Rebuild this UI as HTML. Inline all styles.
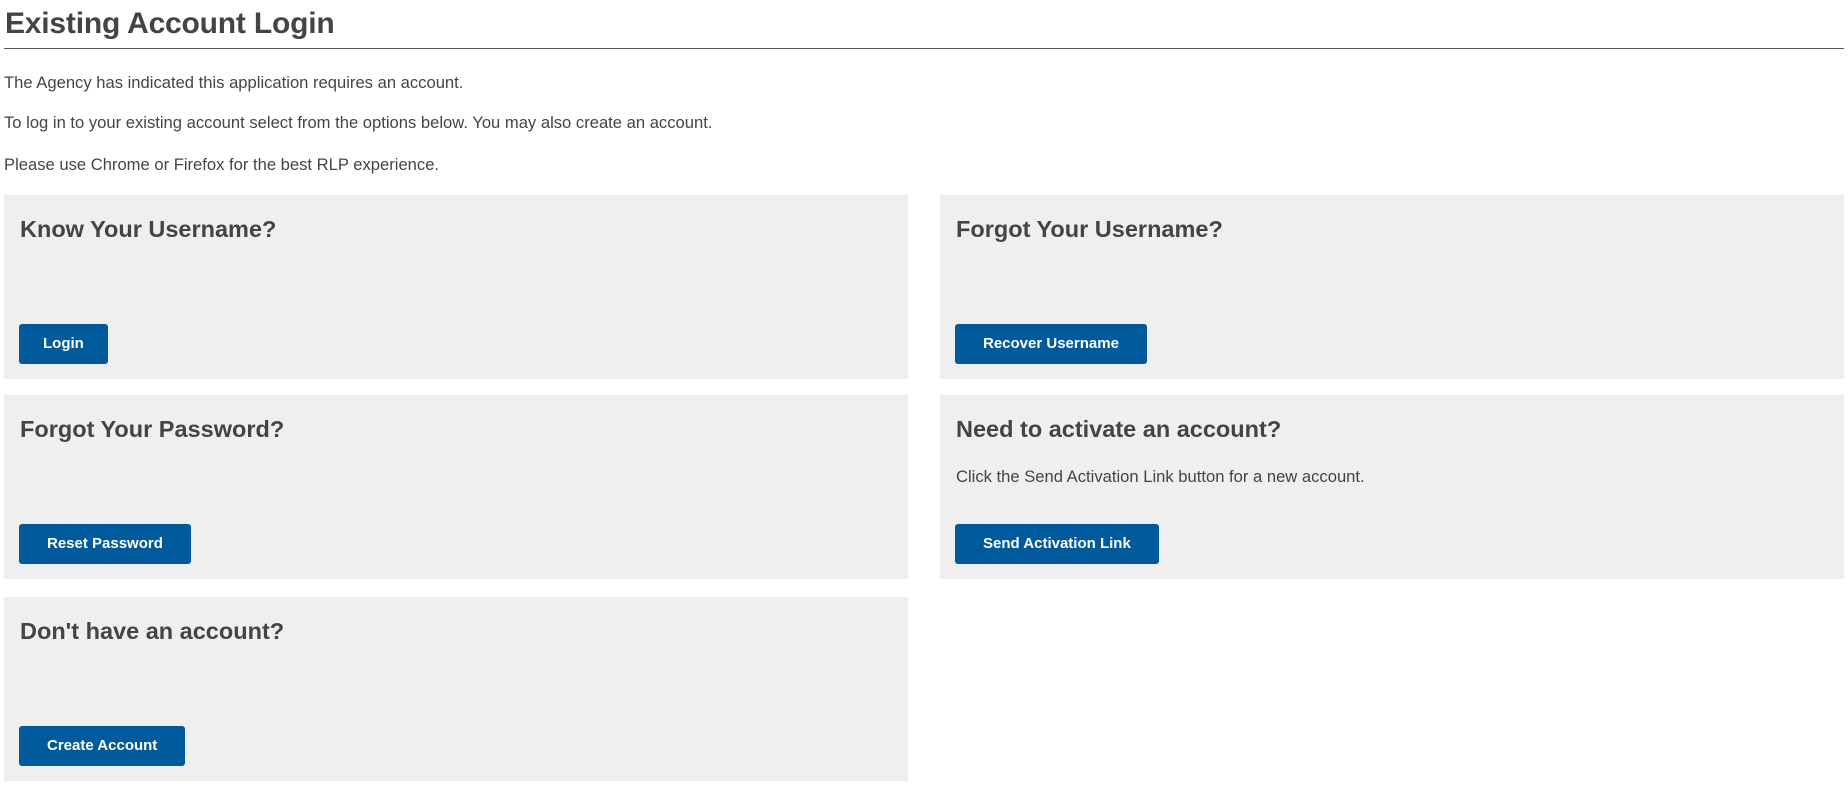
<!DOCTYPE html>
<html><head><meta charset="utf-8"><style>
body{margin:0;background:#fff;font-family:"Liberation Sans",Arial,sans-serif;color:#444;width:1848px;height:791px;overflow:hidden;position:relative}
.t{position:absolute;left:5px;top:7px;font-size:30px;font-weight:bold;color:#444;margin:0;letter-spacing:-0.2px}
.hr{position:absolute;left:4px;width:1840px;top:48px;height:1px;background:#555}
.p{position:absolute;left:4px;font-size:16.6px;color:#444}
.panel{position:absolute;width:904px;height:184px;background:#efefef}
.panel h2{position:absolute;left:16px;top:21px;margin:0;font-size:23.5px;font-weight:bold;color:#444}
.panel .d{position:absolute;left:16px;top:72px;font-size:16.6px;color:#444}
.btn{position:absolute;left:15px;top:129px;height:40px;background:#005a9c;color:#fff;border-radius:3px;font-size:15px;font-weight:bold;line-height:40px;padding:0 28px}
</style></head><body>
<h1 class="t">Existing Account Login</h1>
<div class="hr"></div>
<div class="p" style="top:73px">The Agency has indicated this application requires an account.</div>
<div class="p" style="top:113px">To log in to your existing account select from the options below. You may also create an account.</div>
<div class="p" style="top:155px">Please use Chrome or Firefox for the best RLP experience.</div>

<div class="panel" style="left:4px;top:195px"><h2>Know Your Username?</h2><div class="btn" style="padding:0 24px">Login</div></div>
<div class="panel" style="left:940px;top:195px"><h2>Forgot Your Username?</h2><div class="btn">Recover Username</div></div>
<div class="panel" style="left:4px;top:395px"><h2>Forgot Your Password?</h2><div class="btn">Reset Password</div></div>
<div class="panel" style="left:940px;top:395px"><h2>Need to activate an account?</h2><div class="d">Click the Send Activation Link button for a new account.</div><div class="btn">Send Activation Link</div></div>
<div class="panel" style="left:4px;top:597px"><h2>Don't have an account?</h2><div class="btn">Create Account</div></div>
</body></html>
